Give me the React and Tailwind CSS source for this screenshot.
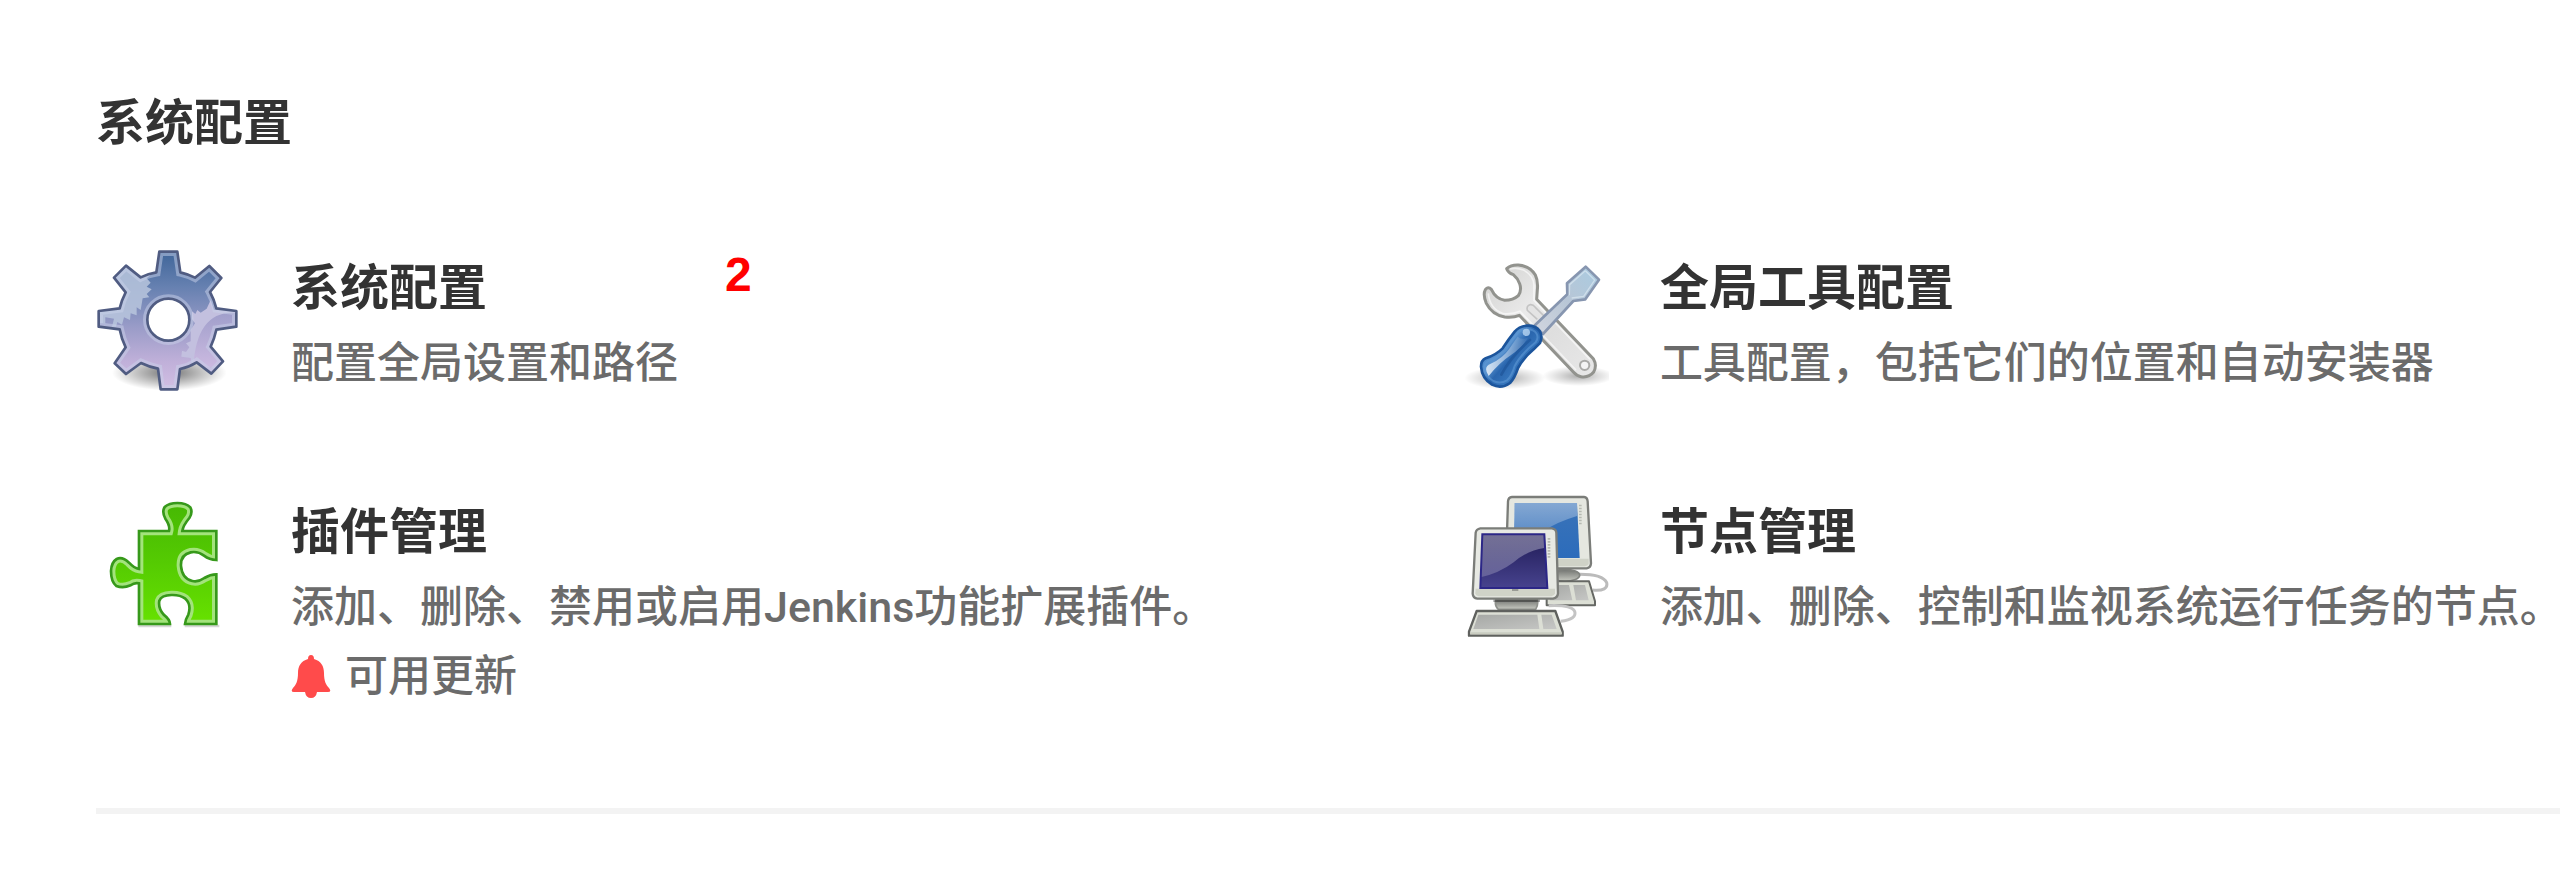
function GearIcon() {
  return (
    <svg viewBox="48 57 432 432" className="size-36 shrink-0" aria-hidden="true">
      <defs>
        <linearGradient id="gear-body" x1="0" y1="0" x2="0" y2="1">
          <stop offset="0" stopColor="#3f6599" />
          <stop offset="0.25" stopColor="#6580b0" />
          <stop offset="0.55" stopColor="#9a9cc8" />
          <stop offset="0.8" stopColor="#c0b0d9" />
          <stop offset="1" stopColor="#d2bfe4" />
        </linearGradient>
        <linearGradient id="gear-lobe" x1="0" y1="0" x2="0" y2="1">
          <stop offset="0" stopColor="#a09fcb" />
          <stop offset="1" stopColor="#cbb9e0" />
        </linearGradient>
        <radialGradient id="gear-shadow">
          <stop offset="0" stopColor="#000" stopOpacity="0.55" />
          <stop offset="0.6" stopColor="#000" stopOpacity="0.22" />
          <stop offset="1" stopColor="#000" stopOpacity="0" />
        </radialGradient>
        <path
          id="gear-shape"
          fillRule="evenodd"
          d="M238 65H292L301 127Q323 132 345 143L388 108L424 144L390 186Q403 210 409 235L469 243V290L409 299Q403 326 392 350L429 394L394 431L350 397Q326 412 300 417L292 478H242L234 416Q208 411 183 399L138 432L104 400L137 352Q124 326 119 298L56 290V243L119 235Q125 210 137 187L102 143L138 107L182 142Q205 131 229 127ZM265 206A63 63 0 1 0 265 332A63 63 0 1 0 265 206Z"
        />
        <clipPath id="gear-clip">
          <path
            clipRule="evenodd"
            d="M238 65H292L301 127Q323 132 345 143L388 108L424 144L390 186Q403 210 409 235L469 243V290L409 299Q403 326 392 350L429 394L394 431L350 397Q326 412 300 417L292 478H242L234 416Q208 411 183 399L138 432L104 400L137 352Q124 326 119 298L56 290V243L119 235Q125 210 137 187L102 143L138 107L182 142Q205 131 229 127ZM265 206A63 63 0 1 0 265 332A63 63 0 1 0 265 206Z"
          />
        </clipPath>
      </defs>
      <ellipse cx="268" cy="428" rx="172" ry="54" fill="url(#gear-shadow)" />
      <circle cx="265" cy="269" r="63" fill="#fff" />
      <g clipPath="url(#gear-clip)">
        <use href="#gear-shape" fill="url(#gear-body)" />
        <path
          d="M50 60H215V132L200 145L212 158L200 170L215 178L200 192L208 202L188 205L182 240L170 232V256L152 250L150 270L132 262L126 284L112 276L108 290H96L102 266L76 262V280H50Z"
          fill="#b8c5dd"
          fillOpacity="0.85"
        />
        <path d="M480 240H402L392 210L380 236L362 248L352 240L346 252L336 244V268L345 280L332 300V334L318 340L328 352L318 366L306 362L304 380L332 384L335 400L480 430Z" fill="#c3c0df" />
        <path d="M480 250Q350 232 340 410H440V300H480Z" fill="url(#gear-lobe)" />
        <use href="#gear-shape" fill="none" stroke="#c9d1ea" strokeOpacity="0.5" strokeWidth="26" />
      </g>
      <use href="#gear-shape" fill="none" stroke="#505c82" strokeWidth="8" strokeLinejoin="round" />
    </svg>
  )
}

function ToolsIcon() {
  return (
    <svg viewBox="45 27 432 432" className="size-36 shrink-0" aria-hidden="true">
      <defs>
        <linearGradient id="tools-steel" x1="0" y1="0" x2="1" y2="1">
          <stop offset="0" stopColor="#d0d0ce" />
          <stop offset="0.4" stopColor="#eaeaea" />
          <stop offset="0.6" stopColor="#dedede" />
          <stop offset="1" stopColor="#e8e8e8" />
        </linearGradient>
        <linearGradient id="tools-blade" x1="1" y1="0" x2="0" y2="1">
          <stop offset="0" stopColor="#a9cbe1" />
          <stop offset="0.5" stopColor="#b8c6d6" />
          <stop offset="1" stopColor="#d2d6df" />
        </linearGradient>
        <linearGradient id="tools-handle" x1="0.15" y1="0.2" x2="0.8" y2="0.75">
          <stop offset="0" stopColor="#3b7cc2" />
          <stop offset="0.35" stopColor="#5b94d0" />
          <stop offset="0.55" stopColor="#2a66ae" />
          <stop offset="1" stopColor="#3f82c8" />
        </linearGradient>
        <linearGradient id="tools-gloss" x1="1" y1="0" x2="0" y2="1">
          <stop offset="0" stopColor="#fff" stopOpacity="0.05" />
          <stop offset="1" stopColor="#fff" stopOpacity="0.8" />
        </linearGradient>
        <radialGradient id="tools-shadow">
          <stop offset="0" stopColor="#000" stopOpacity="0.32" />
          <stop offset="0.5" stopColor="#000" stopOpacity="0.15" />
          <stop offset="1" stopColor="#000" stopOpacity="0" />
        </radialGradient>
      </defs>
      <ellipse cx="165" cy="414" rx="122" ry="34" fill="url(#tools-shadow)" />
      <ellipse cx="385" cy="408" rx="108" ry="30" fill="url(#tools-shadow)" />
      <path
        d="M170 86Q183 74 205 75Q240 78 256 105Q265 123 262 150L260 178L430 356Q442 376 431 396Q416 414 393 410Q381 408 370 396L208 226Q190 234 164 231Q126 224 109 190Q98 164 106 149Q114 138 124 148Q137 176 164 181Q190 181 205 167Q216 150 209 131Q203 115 190 104Q174 98 170 86Z"
        fill="url(#tools-steel)"
        stroke="#92938e"
        strokeWidth="9"
        strokeLinejoin="round"
      />
      <path
        d="M180 87Q200 82 220 90Q250 105 252 135L252 181L420 358M115 160Q119 207 160 221Q187 224 210 214L378 390"
        fill="none"
        stroke="#fff"
        strokeOpacity="0.6"
        strokeWidth="5"
      />
      <path d="M262 238L232 211Q228 197 241 194Q249 193 256 202L288 234" fill="#e4e4e4" stroke="#c4c4c4" strokeWidth="5" />
      <circle cx="404" cy="376" r="14" fill="#f4f4f4" stroke="#aaaaa8" strokeWidth="6" />
      <path
        d="M407 80L447 119L406 178L370 183L279 282L253 257L352 163L351 130Z"
        fill="url(#tools-blade)"
        stroke="#8796b0"
        strokeWidth="8"
        strokeLinejoin="round"
      />
      <path d="M406 92L434 120L401 169L365 174M358 166L359 134L406 92" fill="none" stroke="#e3edf5" strokeOpacity="0.6" strokeWidth="4" />
      <path
        d="M230 257Q256 255 269 273Q279 289 270 309L251 328Q220 354 204 384Q194 414 180 429Q154 448 126 434Q96 416 93 380Q93 361 107 355Q139 344 158 325Q176 297 194 275Q207 259 230 257Z"
        fill="url(#tools-handle)"
        stroke="#1c559c"
        strokeWidth="8"
      />
      <path
        d="M228 268Q250 266 259 280Q267 293 257 307Q212 343 194 378Q185 409 171 421Q151 433 130 423Q107 409 104 382Q103 368 113 364Q147 352 168 330Q186 300 202 281Q212 269 228 268Z"
        fill="none"
        stroke="#5e98d4"
        strokeOpacity="0.6"
        strokeWidth="6"
      />
      <path d="M203 290Q216 302 235 292Q215 324 183 345Q148 368 116 408Q98 380 122 371Q158 355 178 326Z" fill="url(#tools-gloss)" />
      <path d="M240 300Q182 350 154 404" fill="none" stroke="#174a8c" strokeOpacity="0.45" strokeWidth="8" strokeLinecap="round" />
      <circle cx="229" cy="277" r="11" fill="#b8d6f2" fillOpacity="0.8" />
    </svg>
  )
}

function PuzzleIcon() {
  return (
    <svg viewBox="18 39 432 432" className="size-36 shrink-0" aria-hidden="true">
      <defs>
        <linearGradient id="puzzle-body" x1="0" y1="0" x2="0" y2="1">
          <stop offset="0" stopColor="#46b803" />
          <stop offset="0.5" stopColor="#55cb02" />
          <stop offset="1" stopColor="#67e200" />
        </linearGradient>
        <path
          id="puzzle-shape"
          d="M147 153H237Q241 137 226 116Q215 96 224 81Q237 69 262 69Q289 69 301 82Q309 97 298 114Q279 137 277 153H379V240Q358 239 342 227Q324 213 302 217Q271 224 273 258Q276 296 307 303Q325 307 343 294Q361 283 379 283V432H285Q286 419 295 404Q305 373 286 356Q270 344 244 345Q214 346 208 362Q204 384 221 404Q240 419 240 432H147V310Q133 307 122 316Q99 326 79 318Q63 305 63 273Q64 247 80 237Q97 229 117 248Q133 265 147 267Z"
        />
        <clipPath id="puzzle-clip">
          <use href="#puzzle-shape" />
        </clipPath>
      </defs>
      <path d="M145 438H244M284 438H388" stroke="#000" strokeOpacity="0.16" strokeWidth="8" />
      <use href="#puzzle-shape" fill="url(#puzzle-body)" />
      <g clipPath="url(#puzzle-clip)">
        <use href="#puzzle-shape" fill="none" stroke="#a3e37c" strokeWidth="26" />
      </g>
      <use href="#puzzle-shape" fill="none" stroke="#36991a" strokeWidth="8" />
    </svg>
  )
}

function ComputersIcon() {
  return (
    <svg viewBox="45 39 432 432" className="size-36 shrink-0" aria-hidden="true">
      <defs>
        <linearGradient id="screen-back" x1="0" y1="0" x2="0" y2="1">
          <stop offset="0" stopColor="#3a73b8" />
          <stop offset="1" stopColor="#2c6cbb" />
        </linearGradient>
        <linearGradient id="screen-front" x1="0" y1="0" x2="0" y2="1">
          <stop offset="0" stopColor="#1f1a55" />
          <stop offset="1" stopColor="#47438e" />
        </linearGradient>
        <linearGradient id="screen-gloss" x1="0" y1="0" x2="0" y2="1">
          <stop offset="0" stopColor="#fff" stopOpacity="0.38" />
          <stop offset="1" stopColor="#fff" stopOpacity="0.2" />
        </linearGradient>
        <linearGradient id="key-tray" x1="0" y1="0" x2="1" y2="1">
          <stop offset="0" stopColor="#a6a8a5" />
          <stop offset="1" stopColor="#c6c7c5" />
        </linearGradient>
        <linearGradient id="monitor-foot" x1="0" y1="0" x2="0" y2="1">
          <stop offset="0" stopColor="#70726f" />
          <stop offset="1" stopColor="#c8cac2" />
        </linearGradient>
      </defs>

      <path d="M384 283Q458 282 470 308Q476 334 428 330" fill="none" stroke="#bbb" strokeWidth="9" />
      <ellipse cx="345" cy="286" rx="44" ry="18" fill="url(#monitor-foot)" stroke="#81837f" strokeWidth="5" />
      <path d="M290 304H417L435 364V376H290Z" fill="#dcdfd5" stroke="#666864" strokeWidth="6" strokeLinejoin="round" />
      <path d="M300 315H357L367 361H300ZM370 315H405L416 361H378Z" fill="url(#key-tray)" />
      <path d="M186 51H402Q412 52 413 64L423 250Q422 263 410 265H190Q169 263 168 247L174 64Q175 52 186 51Z" fill="#e5e7e0" stroke="#7b7d79" strokeWidth="7" />
      <path d="M180 236H416V252Q413 258 404 259H180Z" fill="#cfd2c7" />
      <path d="M194 69H381L389 234H190Z" fill="url(#screen-back)" />
      <path d="M194 69H381V108Q322 126 286 150L190 160Z" fill="url(#screen-gloss)" />
      <path d="M391 74V135" stroke="#b7bab2" strokeWidth="8" strokeDasharray="5 4" />

      <path d="M296 377Q364 374 374 394Q382 418 332 424" fill="none" stroke="#c4c4c4" strokeWidth="9" />
      <path d="M138 358H262Q266 374 257 388H145Q132 377 138 358Z" fill="url(#monitor-foot)" stroke="#8e908b" strokeWidth="5" />
      <path d="M130 362H270" stroke="#000" strokeOpacity="0.35" strokeWidth="8" />
      <path d="M91 145H306Q318 147 319 158L324 340Q323 353 309 356H82Q69 354 68 341L77 158Q79 147 91 145Z" fill="#e7e9e3" stroke="#7b7d79" strokeWidth="7" />
      <path d="M77 326H315V340Q313 348 304 349H86Q77 347 76 340Z" fill="#d0d3c8" />
      <path d="M97 163H283L292 324H91Z" fill="url(#screen-front)" />
      <path d="M97 163H283V204Q232 211 191 247Q147 280 92 292Z" fill="url(#screen-gloss)" />
      <path d="M97 163H283L292 324H91Z" fill="none" stroke="#2c2787" strokeWidth="6" />
      <path d="M297 174V236" stroke="#b7bab2" strokeWidth="8" strokeDasharray="5 4" />
      <path d="M186 330H205" stroke="#8e908b" strokeWidth="5" />
      <path d="M80 393H316L338 455V467H57V455Z" fill="#dcdfd5" stroke="#5f615e" strokeWidth="7" strokeLinejoin="round" />
      <path d="M85 404H262L268 447H70ZM274 404H305L320 447H280Z" fill="url(#key-tray)" />
      <path d="M60 460H336" stroke="#c9ccc0" strokeWidth="6" />
    </svg>
  )
}

function BellIcon() {
  return (
    <svg viewBox="0 0 40 43" className="h-[43px] w-10 shrink-0" fill="#ff4b4b" aria-hidden="true">
      <path d="M20 0Q23 0 23 4C30 6 33 11 33 18C33 26 35 30 38 33Q41 37 37 37H26Q25 43 20 43Q15 43 14 37H3Q-1 37 2 33C5 30 7 26 7 18C7 11 10 6 17 4Q17 0 20 0Z" />
    </svg>
  )
}

const items = [
  { title: '系统配置', description: '配置全局设置和路径', Icon: GearIcon, marker: '2' },
  { title: '全局工具配置', description: '工具配置，包括它们的位置和自动安装器', Icon: ToolsIcon },
  { title: '插件管理', description: '添加、删除、禁用或启用Jenkins功能扩展插件。', Icon: PuzzleIcon, notice: '可用更新' },
  { title: '节点管理', description: '添加、删除、控制和监视系统运行任务的节点。', Icon: ComputersIcon },
]

function ManageItem({ title, description, Icon, marker, notice }) {
  return (
    <a href="#" className="flex items-start gap-[51px] whitespace-nowrap">
      <span className="pt-[2px]">
        <Icon />
      </span>
      <dl>
        <dt className="relative text-[49px] leading-[82px] font-bold text-[#333]">
          {title}
          {marker && (
            <span className="absolute top-0 left-[434px] text-[48px] leading-[56px] text-[#ff0000]">{marker}</span>
          )}
        </dt>
        <dd className="font-['Roboto','Noto_Sans_CJK_SC',sans-serif] text-[43px] leading-[69px] font-medium text-[#6b6b6b]">
          {description}
        </dd>
        {notice && (
          <dd className="flex items-center gap-[14px] font-['Roboto','Noto_Sans_CJK_SC',sans-serif] text-[43px] leading-[69px] font-medium text-[#6b6b6b]">
            <BellIcon />
            {notice}
          </dd>
        )}
      </dl>
    </a>
  )
}

export default function App() {
  return (
    <main className="min-h-screen overflow-hidden bg-white pt-[82px] pl-24 font-['Liberation_Sans','Noto_Sans_CJK_SC',sans-serif]">
      <section>
        <h2 className="mb-[83px] text-[49px] leading-[82px] font-bold text-[#333]">系统配置</h2>
        <div className="grid grid-cols-[minmax(0,5fr)_minmax(0,4fr)] gap-y-[93px]">
          {items.map(item => (
            <ManageItem key={item.description} {...item} />
          ))}
        </div>
        <hr className="mt-[97px] border-t-[6px] border-[#f3f3f3]" />
      </section>
    </main>
  )
}
